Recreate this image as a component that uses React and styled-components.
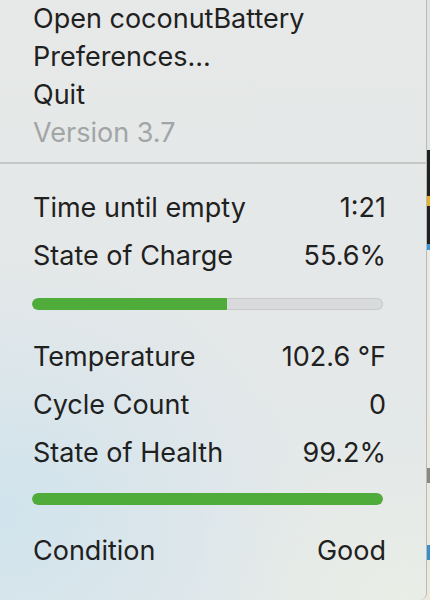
import React from 'react';
import styled, {createGlobalStyle} from 'styled-components';

const GlobalStyle = createGlobalStyle`
    html, body {
        margin: 0;
        padding: 0;
        background: #ece9dc;
    }
    #root {
        height: 600px;
    }
`;

const Screen = styled.div`
    display: flex;
    width: 430px;
    height: 600px;
    overflow: hidden;
    font-family: Inter, "Liberation Sans", sans-serif;
`;

const Menu = styled.div`
    width: 426px;
    flex: none;
    display: flex;
    flex-direction: column;
    border-right: 1px solid #b9bbbb;
    border-bottom-right-radius: 7px;
    background:
        radial-gradient(ellipse 300px 260px at 0% 85%, rgba(203, 226, 238, 0.75), rgba(203, 226, 238, 0) 100%),
        radial-gradient(ellipse 240px 180px at 95% 100%, rgba(234, 238, 230, 0.9), rgba(234, 238, 230, 0) 100%),
        linear-gradient(180deg, #e7e9e9 0%, #e5e8e8 45%, #e2e8ea 100%);
`;

const Actions = styled.div`
    display: flex;
    flex-direction: column;
    padding: 0 0 10px 33px;
`;

const Action = styled.div`
    font-size: 27px;
    line-height: 38px;
    color: ${p => (p.disabled ? '#a2a5a5' : '#1f2121')};
`;

const Separator = styled.div`
    height: 2px;
    background: #c6c8c8;
`;

const Stats = styled.div`
    display: flex;
    flex-direction: column;
    padding: 20px 40px 0 32px;
`;

const Row = styled.div`
    display: flex;
    justify-content: space-between;
    font-size: 27px;
    line-height: 48px;
    color: #1f2121;
    padding-left: 1px;
`;

const Bar = styled.div`
    height: 12px;
    margin: ${p => p.margin};
    margin-right: 3px;
    border-radius: 6px;
    background: #d9dadb;
    box-shadow: inset 0 0 0 1px #c9cbcb;
    overflow: hidden;
`;

const Fill = styled.div`
    height: 100%;
    background: #4fac3b;
    border-radius: 6px 0 0 6px;
`;

// what shows behind the menu at its right edge
const Backdrop = styled.div`
    flex: 1;
    display: flex;
    flex-direction: column;
`;

const Patch = styled.div`
    height: ${p => p.h}px;
    background: ${p => p.c};
    flex: none;
`;

const patches = [
    [150, '#e1e3e3'], [46, '#1f2020'], [10, '#e6b02a'], [38, '#1f2020'], [6, '#3d97d3'],
    [163, '#e9eae6'], [55, '#ece9dc'], [15, '#8b887e'], [62, '#ece9dc'], [15, '#3a8fc6'], [50, '#ece9dc'],
];

const stats1 = [['Time until empty', '1:21'], ['State of Charge', '55.6%']];
const stats2 = [['Temperature', '102.6 °F'], ['Cycle Count', '0'], ['State of Health', '99.2%']];

const App = () => {
    const charge = 55.6;
    const health = 99.2;

    return (
        <Screen>
            <GlobalStyle/>
            <Menu>
                <Actions>
                    <Action>Open coconutBattery</Action>
                    <Action>Preferences...</Action>
                    <Action>Quit</Action>
                    <Action disabled>Version 3.7</Action>
                </Actions>
                <Separator/>
                <Stats>
                    {stats1.map(([label, value]) => (
                        <Row key={label}><span>{label}</span><span>{value}</span></Row>
                    ))}
                    <Bar margin="18px 0 23px 0">
                        <Fill style={{width: charge + '%'}}/>
                    </Bar>
                    {stats2.map(([label, value]) => (
                        <Row key={label}><span>{label}</span><span>{value}</span></Row>
                    ))}
                    <Bar margin="16px 0 22px 0">
                        <Fill style={{width: Math.min(100, health + 0.8) + '%', borderRadius: 6}}/>
                    </Bar>
                    <Row><span>Condition</span><span>Good</span></Row>
                </Stats>
            </Menu>
            <Backdrop>
                {patches.map(([h, c], i) => <Patch key={i} h={h} c={c}/>)}
            </Backdrop>
        </Screen>
    );
};

export default App;
